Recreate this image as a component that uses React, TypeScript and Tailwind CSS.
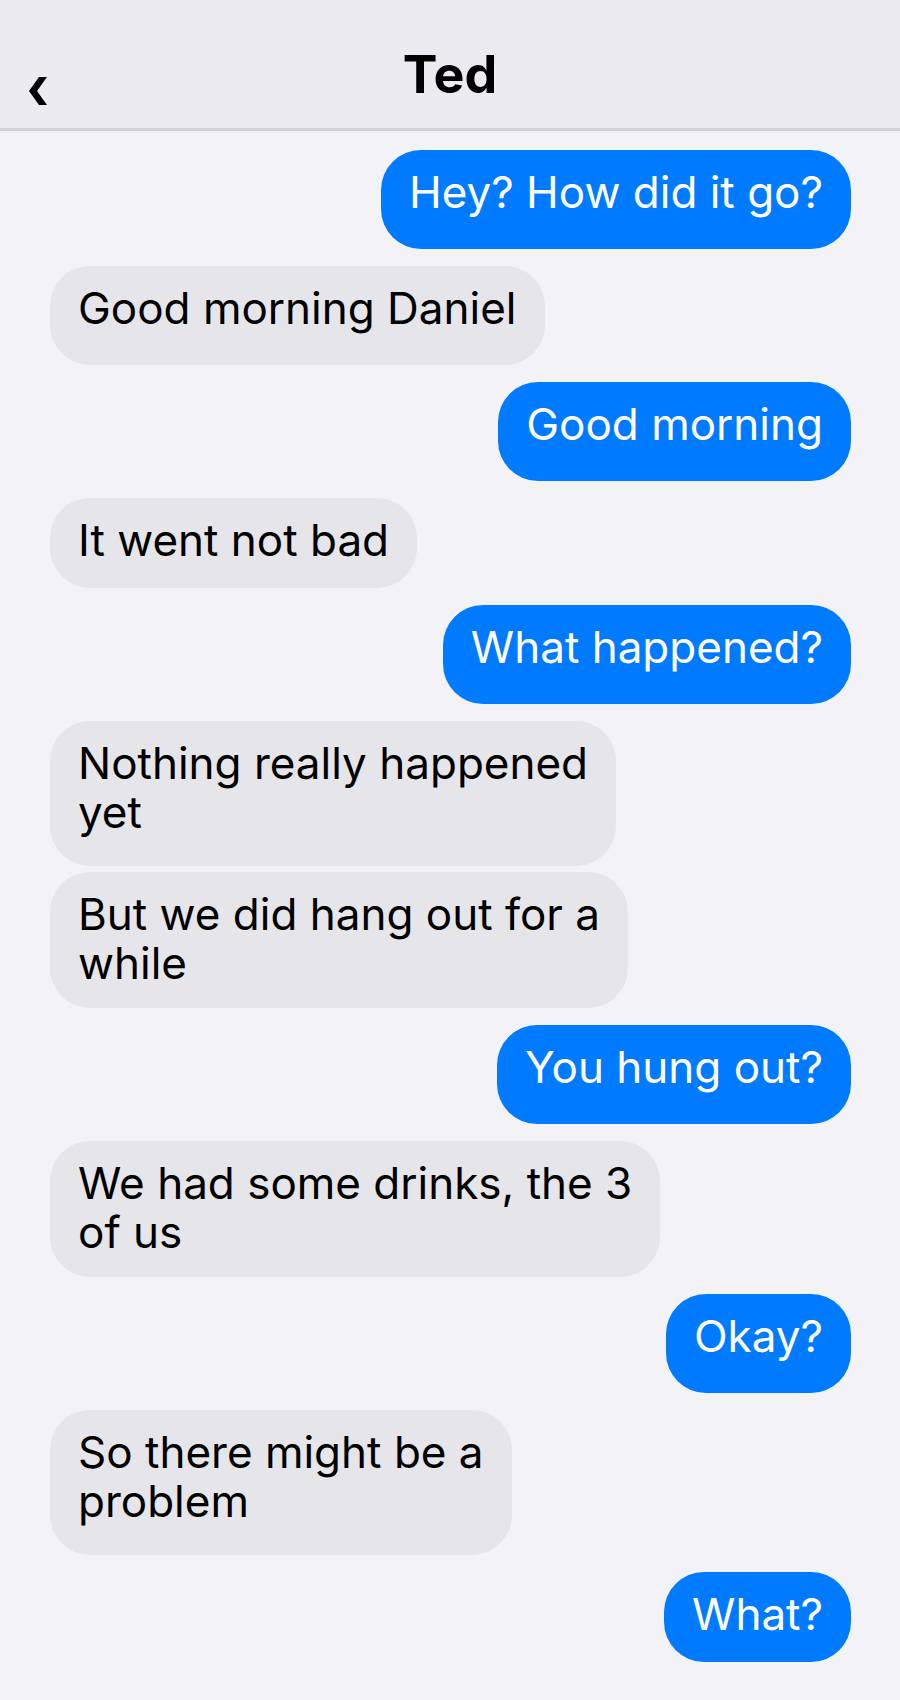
import React from "react";

type Message = {
  from: "me" | "them";
  text: string;
  // true when the last line has a descender (g, p, y...)
  low?: boolean;
};

const messages: Message[] = [
  { from: "me", text: "Hey? How did it go?", low: true },
  { from: "them", text: "Good morning Daniel", low: true },
  { from: "me", text: "Good morning", low: true },
  { from: "them", text: "It went not bad" },
  { from: "me", text: "What happened?", low: true },
  { from: "them", text: "Nothing really happened\nyet", low: true },
  { from: "them", text: "But we did hang out for a\nwhile" },
  { from: "me", text: "You hung out?", low: true },
  { from: "them", text: "We had some drinks, the 3\nof us" },
  { from: "me", text: "Okay?", low: true },
  { from: "them", text: "So there might be a\nproblem", low: true },
  { from: "me", text: "What?" },
];

const padding = (m: Message) => {
  const multi = m.text.includes("\n");
  if (multi) return m.low ? "pt-[18px] pb-[29px]" : "pt-[18px] pb-[20px]";
  return m.low ? "pt-[18px] pb-[32px]" : "pt-[18px] pb-[23px]";
};

const Bubble = ({ msg, first, same }: { msg: Message; first: boolean; same: boolean }) => {
  const mine = msg.from === "me";
  return (
    <div
      className={`flex ${mine ? "justify-end" : "justify-start"} ${
        first ? "" : same ? "mt-[6px]" : "mt-[17px]"
      }`}
    >
      <div
        className={`${padding(msg)} px-[28px] rounded-[40px] whitespace-pre-line text-[44px] leading-[49px] ${
          mine ? "bg-[#007aff] text-white" : "bg-[#e5e5ea] text-black"
        }`}
      >
        {msg.text}
      </div>
    </div>
  );
};

const App = () => {
  return (
    <div className="min-h-screen w-full bg-[#f2f2f7] font-['Inter','Noto_Sans',sans-serif]">
      <header className="grid grid-cols-[1fr_auto_1fr] h-[131px] bg-[#ebebf0] border-b-[3px] border-[#d1d1d6]">
        <div className="pl-[29px] pt-[77px]">
          <svg width="19" height="28" viewBox="0 0 19 28" fill="#000">
            <polygon points="10,0 18,0 8,14 18,28 10,28 0,14" />
          </svg>
        </div>
        <h1 className="pt-[49px] text-[52px] font-bold leading-none text-black">Ted</h1>
        <div />
      </header>

      <div className="pl-[50px] pr-[49px] pt-[19px] pb-[38px]">
        {messages.map((m, i) => (
          <Bubble
            key={i}
            msg={m}
            first={i === 0}
            same={i > 0 && messages[i - 1].from === m.from}
          />
        ))}
      </div>
    </div>
  );
};

export default App;
